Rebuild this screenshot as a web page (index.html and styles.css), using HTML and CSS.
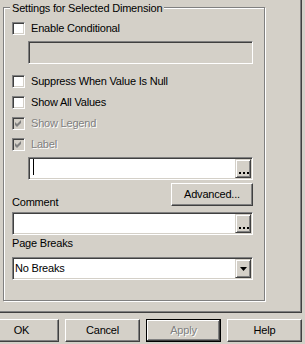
FILE: index.html
```html
<!DOCTYPE html>
<html lang="en">

<head>
    <meta charset="UTF-8">
    <title>Dimension Settings</title>
    <link rel="stylesheet" href="styles.css">
</head>

<body>
    <div class="tab">
        <div class="page">
            <div class="group">
                <div class="group_title">Settings for Selected Dimension</div>

                <label class="check_row"><span class="check"></span>Enable Conditional</label>
                <div class="edit short off"></div>

                <label class="check_row gap_big"><span class="check"></span>Suppress When Value Is Null</label>
                <label class="check_row gap"><span class="check"></span>Show All Values</label>
                <label class="check_row gap disabled">
                    <span class="check checked"><svg width="13" height="13" viewBox="0 0 13 13"><polygon points="3,5 5,7 9,3 9,6 5,10 3,8" fill="#808080"/></svg></span>Show Legend
                </label>
                <label class="check_row gap disabled">
                    <span class="check checked"><svg width="13" height="13" viewBox="0 0 13 13"><polygon points="3,5 5,7 9,3 9,6 5,10 3,8" fill="#808080"/></svg></span>Label
                </label>

                <div class="edit short label_edit"><span class="caret"></span><span class="small_btn dots_btn"><span class="dots"></span></span></div>

                <div class="split_row">
                    <span class="caption low">Comment</span>
                    <button class="btn adv">Advanced...</button>
                </div>
                <div class="edit comment_edit"><span class="small_btn dots_btn"><span class="dots"></span></span></div>

                <div class="caption page_caption">Page Breaks</div>
                <div class="edit combo">
                    <span class="combo_text">No Breaks</span>
                    <span class="small_btn drop_btn"><svg width="7" height="4" viewBox="0 0 7 4"><polygon points="0,0 7,0 3.5,4" fill="#000"/></svg></span>
                </div>
            </div>
        </div>
    </div>

    <div class="buttons">
        <button class="btn">OK</button>
        <button class="btn">Cancel</button>
        <button class="btn default" disabled>Apply</button>
        <button class="btn">Help</button>
    </div>
</body>

</html>
```

FILE: styles.css
```css
body {
    margin: 0;
    background-color: #d4d0c8;
    font-family: "Liberation Sans", Arial, sans-serif;
    font-size: 11px;
    line-height: 13px;
    letter-spacing: -0.2px;
    color: #000;
    overflow: hidden;
}

/* tab page frame, left and top are off screen */
.tab {
    width: 302px;
    box-sizing: border-box;
    border-right: 1px solid #404040;
    border-bottom: 1px solid #404040;
}

.page {
    height: 312px;
    box-sizing: border-box;
    border-right: 1px solid #808080;
    border-bottom: 1px solid #808080;
    padding: 7px 0 0 3px;
}

.group {
    position: relative;
    width: 262px;
    height: 294px;
    box-sizing: border-box;
    border: 1px solid #808080;
    box-shadow: inset 1px 1px #fff, 1px 1px #fff;
    padding: 14px 0 0 8px;
}

.group_title {
    position: absolute;
    top: -6px;
    left: 6px;
    padding: 0 2px;
    background-color: #d4d0c8;
}

.check_row {
    display: flex;
    align-items: center;
    height: 13px;
}

.gap_big {
    margin-top: 11px;
}

.gap {
    margin-top: 8px;
}

.check {
    width: 13px;
    height: 13px;
    box-sizing: border-box;
    flex-shrink: 0;
    margin-right: 6px;
    border: 1px solid;
    border-color: #808080 #fff #fff #808080;
    box-shadow: inset 1px 1px #404040, inset -1px -1px #d4d0c8;
    background-color: #fff;
    position: relative;
}

.check svg {
    position: absolute;
    top: -1px;
    left: -1px;
}

.disabled {
    color: #808080;
    text-shadow: 1px 1px #fff;
}

.disabled .check {
    background-color: #d4d0c8;
}

.edit {
    display: flex;
    align-items: center;
    width: 241px;
    height: 23px;
    box-sizing: border-box;
    padding: 1px;
    border: 1px solid;
    border-color: #808080 #fff #fff #808080;
    box-shadow: inset 1px 1px #404040, inset -1px -1px #d4d0c8;
    background-color: #fff;
}

.short {
    width: 225px;
    margin-left: 16px;
}

.off {
    margin-top: 6px;
    background-color: #d4d0c8;
}

.label_edit {
    margin-top: 6px;
}

.comment_edit {
    margin-top: 6px;
}

.caret {
    align-self: flex-start;
    width: 1px;
    height: 16px;
    margin-left: 3px;
    background-color: #000;
}

.small_btn {
    display: flex;
    width: 16px;
    height: 19px;
    box-sizing: border-box;
    margin-left: auto;
    border: 1px solid;
    border-color: #d4d0c8 #404040 #404040 #d4d0c8;
    box-shadow: inset 1px 1px #fff, inset -1px -1px #808080;
    background-color: #d4d0c8;
}

.dots_btn {
    align-items: flex-end;
    padding: 0 0 3px 3px;
}

.dots {
    width: 2px;
    height: 2px;
    background-color: #000;
    box-shadow: 4px 0 #000, 8px 0 #000;
}

.drop_btn {
    align-items: center;
    justify-content: center;
    padding-top: 1px;
}

.drop_btn svg {
    display: block;
}

.split_row {
    display: flex;
    justify-content: space-between;
    width: 241px;
    height: 23px;
    margin-top: 3px;
}

.low {
    align-self: flex-end;
    margin-bottom: -3px;
}

.page_caption {
    margin-top: 2px;
}

.combo {
    margin-top: 7px;
    padding-left: 2px;
}

.btn {
    width: 75px;
    height: 23px;
    padding: 0;
    box-sizing: border-box;
    border: 1px solid;
    border-color: #fff #404040 #404040 #fff;
    box-shadow: inset -1px -1px #808080;
    background-color: #d4d0c8;
    font: inherit;
    letter-spacing: inherit;
    color: #000;
}

.adv {
    width: 82px;
}

.btn.default {
    border-color: #000;
    box-shadow: inset -1px -1px #404040, inset 1px 1px #fff, inset -2px -2px #808080;
}

.btn:disabled {
    color: #808080;
    text-shadow: 1px 1px #fff;
}

.buttons {
    display: flex;
    gap: 6px;
    margin: 6px 0 0 -16px;
}
```
